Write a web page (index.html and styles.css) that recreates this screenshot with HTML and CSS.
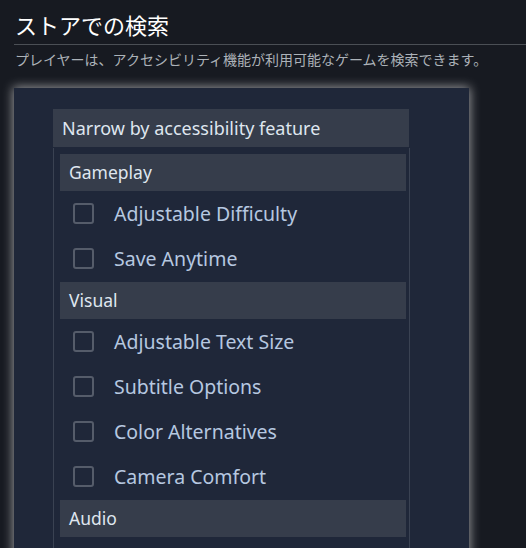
FILE: index.html
```html
<!DOCTYPE html>
<html lang="ja">
<head>
<meta charset="utf-8">
<link rel="stylesheet" href="styles.css">
</head>
<body>
<div class="page">
  <h1 class="title">ストアでの検索</h1>
  <p class="desc">プレイヤーは、アクセシビリティ機能が利用可能なゲームを検索できます。</p>
  <div class="shot">
    <div class="panel">
      <div class="panel-head">Narrow by accessibility feature</div>
      <div class="panel-body">
        <div class="group">Gameplay</div>
        <div class="row"><span class="box"></span><span class="label">Adjustable Difficulty</span></div>
        <div class="row"><span class="box"></span><span class="label">Save Anytime</span></div>
        <div class="group">Visual</div>
        <div class="row"><span class="box"></span><span class="label">Adjustable Text Size</span></div>
        <div class="row"><span class="box"></span><span class="label">Subtitle Options</span></div>
        <div class="row"><span class="box"></span><span class="label">Color Alternatives</span></div>
        <div class="row"><span class="box"></span><span class="label">Camera Comfort</span></div>
        <div class="group">Audio</div>
        <div class="row"><span class="box"></span><span class="label">Stereo Sound</span></div>
      </div>
    </div>
  </div>
</div>
</body>
</html>
```
FILE: styles.css
```css
html, body {
  margin: 0;
  padding: 0;
  background: #171a21;
  height: 100%;
  overflow: hidden;
}
.page {
  padding: 0 0 0 14px;
  font-family: "Noto Sans", "Noto Sans CJK JP", sans-serif;
}
.title {
  margin: 0;
  padding: 10px 0 4px 1px;
  font-size: 22px;
  line-height: 30px;
  font-weight: 400;
  color: #ffffff;
  border-bottom: 1px solid #4b4f55;
}
.desc {
  margin: 0;
  padding: 5px 0 0 1px;
  font-size: 14px;
  line-height: 19px;
  color: #acb2b8;
}
.shot {
  margin-top: 19px;
  width: 455px;
  height: 600px;
  background: #1f2739;
  box-shadow: 0 0 10px 1px rgba(255, 255, 255, 0.55);
  padding: 21px 0 0 39px;
  box-sizing: border-box;
}
.panel {
  width: 357px;
}
.panel-head {
  width: 356px;
  height: 38px;
  box-sizing: border-box;
  background: #363d4b;
  color: #dfe6ef;
  font-size: 18px;
  line-height: 38px;
  padding-left: 9px;
}
.panel-body {
  margin-top: 1px;
  border-left: 1px solid #3a4252;
  border-right: 1px solid #3a4252;
  padding: 6px 3px 0 6px;
}
.group {
  height: 37px;
  background: #363d4b;
  color: #dfe6ef;
  font-size: 17.5px;
  line-height: 37px;
  padding-left: 9px;
  margin-top: 1px;
}
.group:first-child {
  margin-top: 0;
}
.row {
  height: 45px;
  display: flex;
  align-items: center;
  padding-left: 13px;
}
.box {
  width: 21px;
  height: 21px;
  box-sizing: border-box;
  border: 2px solid #555c6a;
  border-radius: 3px;
  flex: none;
}
.label {
  margin-left: 20px;
  font-size: 19.5px;
  color: #b6c8e0;
}
```
